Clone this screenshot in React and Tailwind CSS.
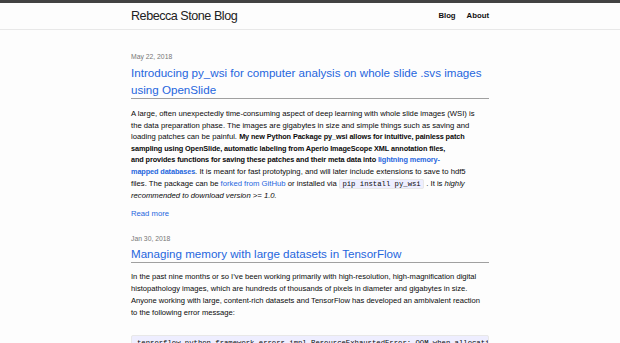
import React from 'react';

const link = 'text-[#2566dd]';
const mono = { fontFamily: '"Liberation Mono", "DejaVu Sans Mono", monospace' };

const Header = () => (
  <header className="border-t-[3px] border-t-[#424242] border-b border-b-[#e8e8e8] bg-[#fdfdfd]">
    <div className="mx-auto w-[358px] h-[26px] flex items-center justify-between">
      <a className="text-[12.6px] tracking-[-0.48px] text-[#222] leading-[26px]">Rebecca Stone Blog</a>
      <nav className="flex gap-[11px] text-[7.75px] text-[#111] font-semibold leading-[26px]">
        <a>Blog</a>
        <a>About</a>
      </nav>
    </div>
  </header>
);

const PostTitle = ({ children }) => (
  <h2 className={`text-[11.6px] leading-[17px] ${link} border-b border-b-[#a0a0a0]`}>
    {children}
  </h2>
);

const Date = ({ children, className = '' }) => (
  <div className={`text-[6.8px] leading-[10px] text-[#777] ${className}`}>{children}</div>
);

export default function App() {
  return (
    <div
      className="h-[343px] bg-[#fdfdfd] text-[#0a0a0a] overflow-hidden"
      style={{ fontFamily: '"Liberation Sans", Arial, sans-serif' }}
    >
      <Header />
      <main className="mx-auto w-[358px] pt-[22px]">
        {/* post 1 */}
        <Date className="mb-[2px]">May 22, 2018</Date>
        <PostTitle>
          Introducing py_wsi for computer analysis on whole slide .svs images using OpenSlide
        </PostTitle>
        <p className="mt-[9px] text-[7.7px] leading-[11.6px]">
          A large, often unexpectedly time-consuming aspect of deep learning with whole slide images (WSI) is
          <br />
          the data preparation phase. The images are gigabytes in size and simple things such as saving and
          <br />
          loading patches can be painful.{' '}
          <strong className="font-bold text-[7.3px] tracking-[-0.1px]">
            My new Python Package py_wsi allows for intuitive, painless patch
            <br />
            sampling using OpenSlide, automatic labeling from Aperio ImageScope XML annotation files,
            <br />
            and provides functions for saving these patches and their meta data into{' '}
            <a className={link}>
              lightning memory-
              <br />
              mapped databases
            </a>
          </strong>
          . It is meant for fast prototyping, and will later include extensions to save to hdf5
          <br />
          files. The package can be <a className={link}>forked from GitHub</a> or installed via{' '}
          <code
            className="bg-[#eeeeff] border border-[#e8e8e8] rounded-[2px] px-[2.4px] text-[7.26px]"
            style={mono}
          >
            pip install py_wsi
          </code>{' '}
          . It is <em>highly</em>
          <br />
          <em>recommended to download version &gt;= 1.0.</em>
        </p>
        <a className={`block mt-[6px] text-[7.7px] leading-[11.6px] ${link}`}>Read more</a>

        {/* post 2 */}
        <Date className="mt-[15px] mb-[1px]">Jan 30, 2018</Date>
        <PostTitle>Managing memory with large datasets in TensorFlow</PostTitle>
        <p className="mt-[8px] text-[7.6px] leading-[11.8px]">
          In the past nine months or so I’ve been working primarily with high-resolution, high-magnification digital
          <br />
          histopathology images, which are hundreds of thousands of pixels in diameter and gigabytes in size.
          <br />
          Anyone working with large, content-rich datasets and TensorFlow has developed an ambivalent reaction
          <br />
          to the following error message:
        </p>
        <pre
          className="mt-[16px] bg-[#eeeeff] border border-[#e8e8e8] rounded-[2px] overflow-hidden whitespace-pre pl-[5px] pt-[2px] pb-[8px] text-[7.26px] leading-[10px]"
          style={mono}
        >
          tensorflow.python.framework.errors_impl.ResourceExhaustedError: OOM when allocating tensor
        </pre>
      </main>
    </div>
  );
}
